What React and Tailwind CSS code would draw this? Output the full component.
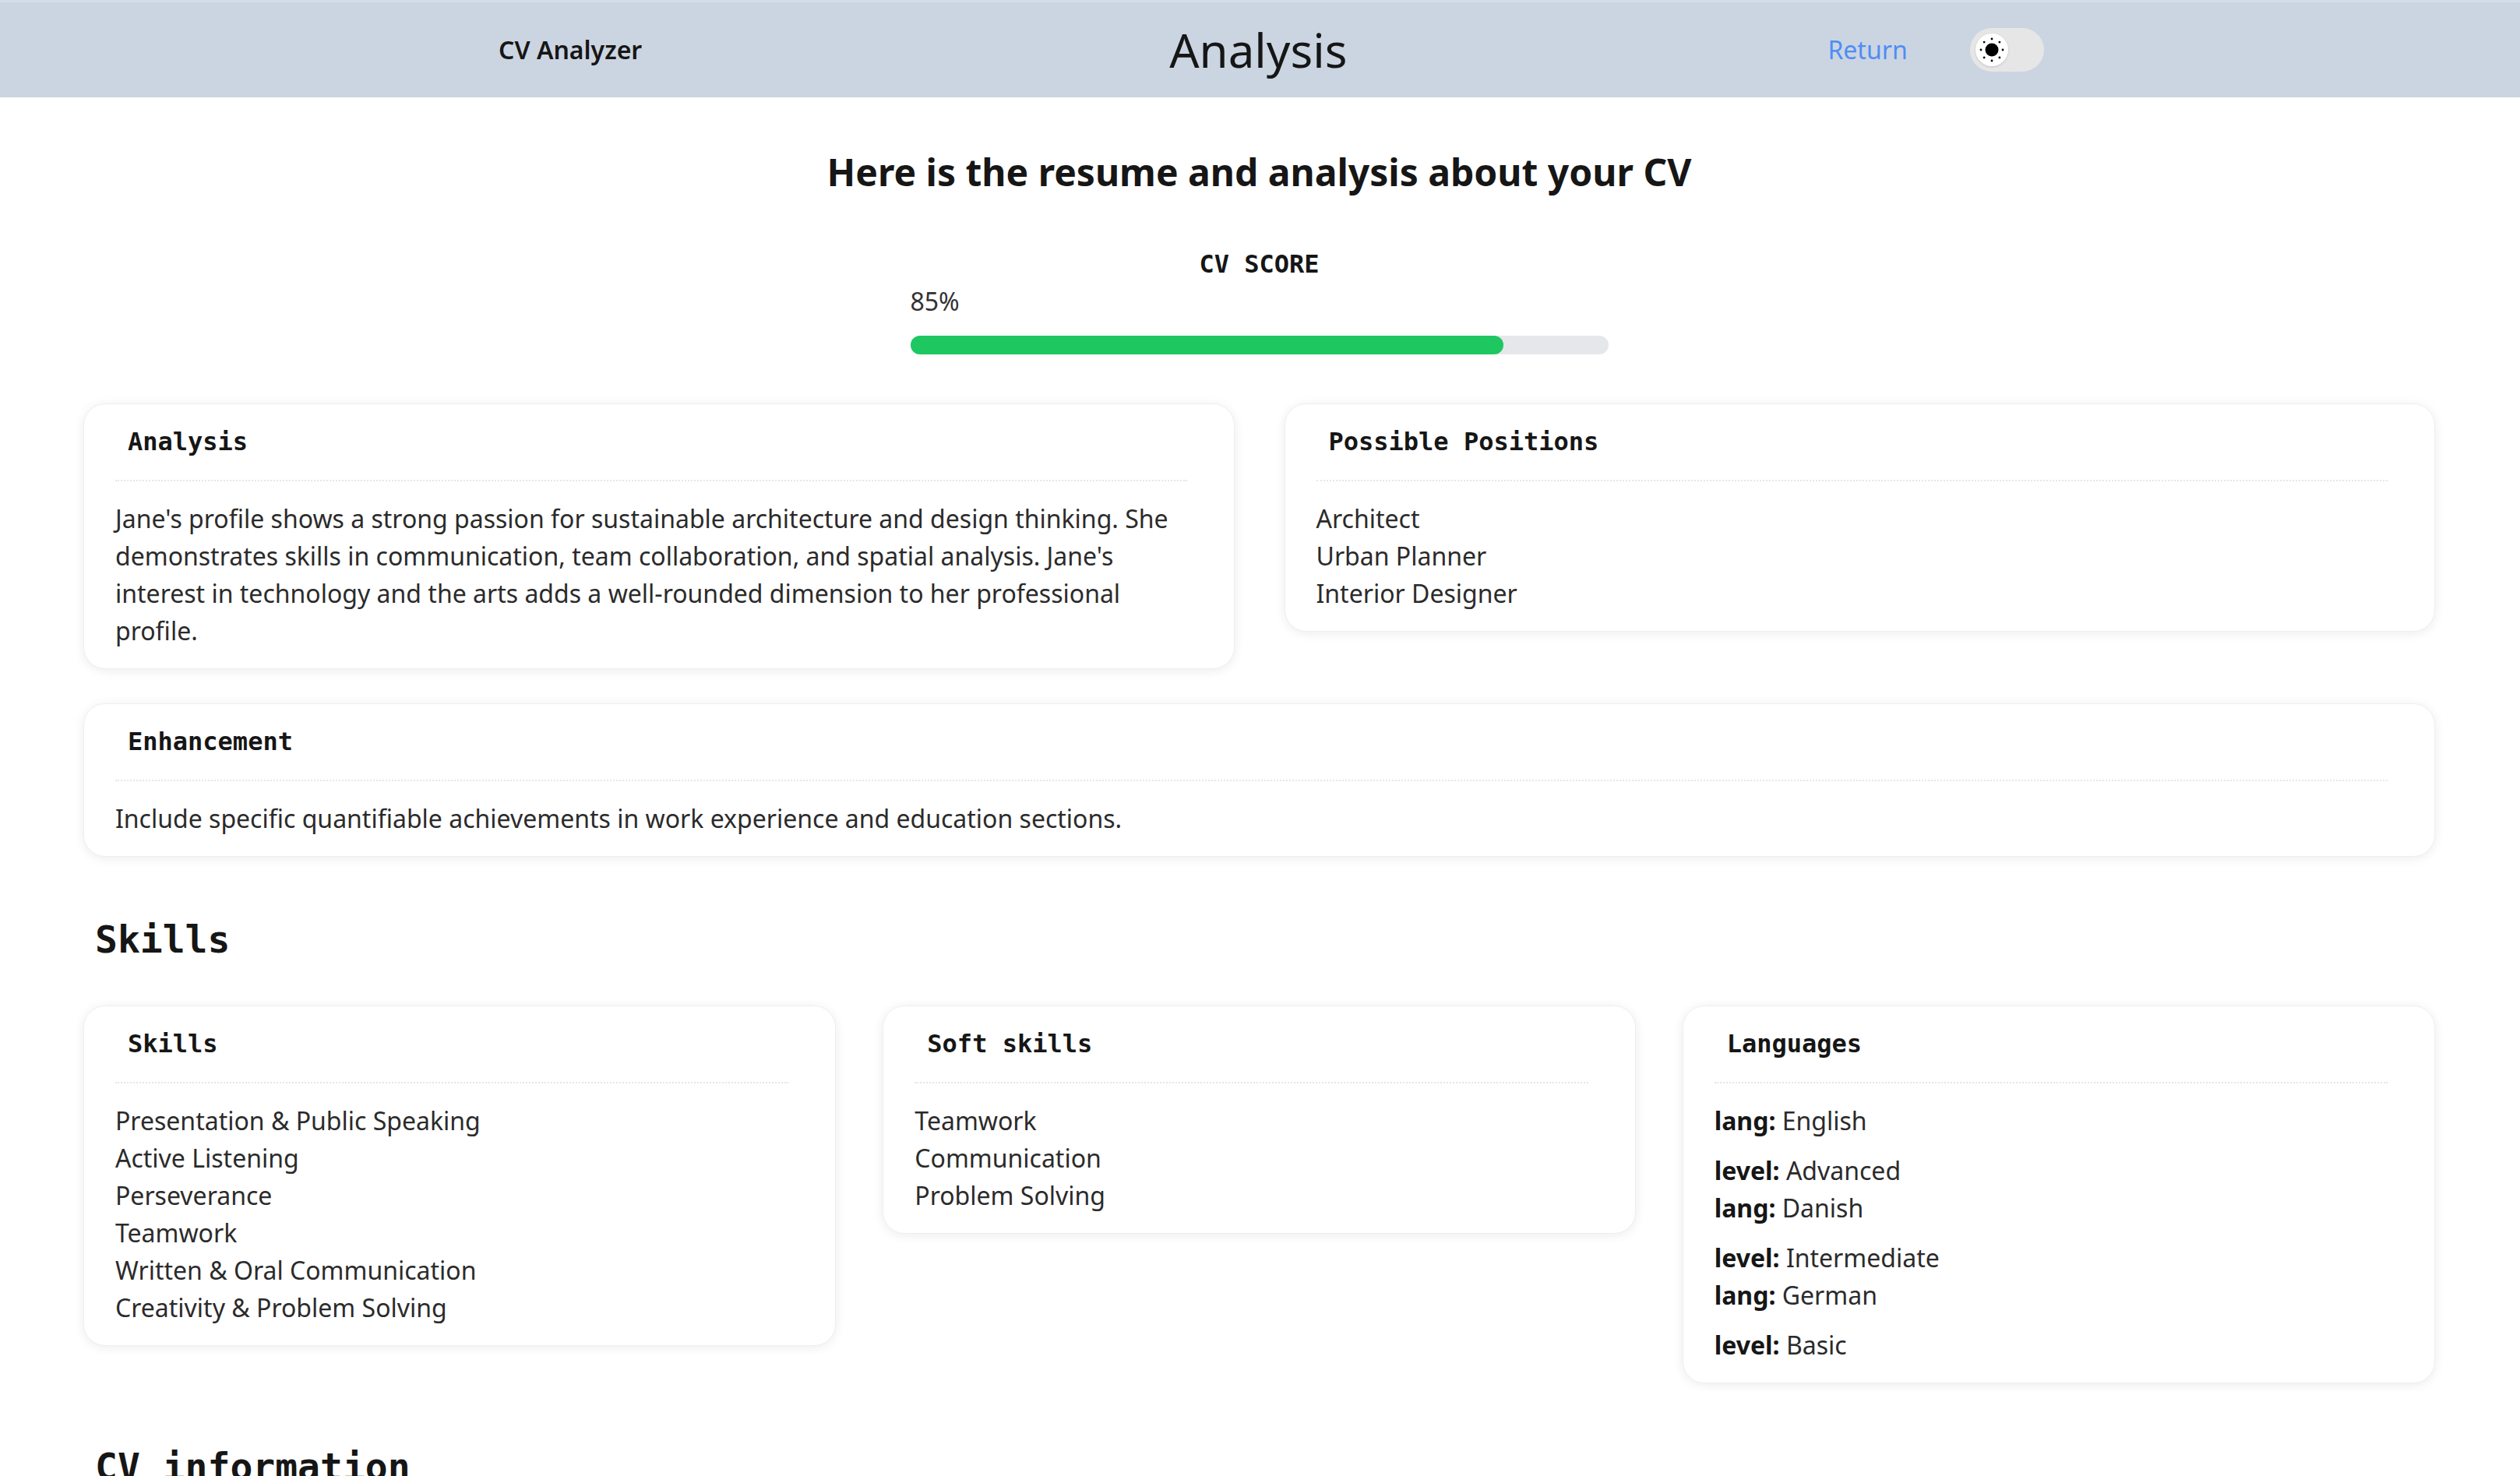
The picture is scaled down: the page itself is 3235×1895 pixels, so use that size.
import React from "react";

// ===== small helpers =====
const SunIcon = () => (
  <svg width="34" height="34" viewBox="0 0 34 34">
    <circle cx="17" cy="17" r="8.5" fill="#000" />
    {[0, 45, 90, 135, 180, 225, 270, 315].map((a) => {
      const r = 14;
      const x = 17 + r * Math.cos((a * Math.PI) / 180);
      const y = 17 + r * Math.sin((a * Math.PI) / 180);
      return <circle key={a} cx={x} cy={y} r="1.4" fill="#000" />;
    })}
  </svg>
);

const Card = ({ title, children, className = "" }) => (
  <div
    className={`rounded-[28px] bg-white border border-[#efefef] shadow-[0_2px_14px_rgba(0,0,0,0.08)] px-10 pt-6 pb-6 ${className}`}
  >
    <div className="pl-4 mr-5 pb-[25px] border-b-2 border-dotted border-[#e6e6e6]">
      <h3 className="font-['DejaVu_Sans_Mono',monospace] text-[32px] font-bold leading-[48px] text-[#161616]">
        {title}
      </h3>
    </div>
    <div className="mt-6 text-[32px] leading-[48px]">{children}</div>
  </div>
);

const SectionTitle = ({ children, className = "" }) => (
  <h2
    className={`pl-[15px] font-['DejaVu_Sans_Mono',monospace] text-[48px] font-bold leading-[72px] text-[#161616] ${className}`}
  >
    {children}
  </h2>
);

const positions = ["Architect", "Urban Planner", "Interior Designer"];
const skills = [
  "Presentation & Public Speaking",
  "Active Listening",
  "Perseverance",
  "Teamwork",
  "Written & Oral Communication",
  "Creativity & Problem Solving",
];
const softSkills = ["Teamwork", "Communication", "Problem Solving"];
const languages = [
  { lang: "English", level: "Advanced" },
  { lang: "Danish", level: "Intermediate" },
  { lang: "German", level: "Basic" },
];

const App = () => {
  const score = 85;

  return (
    <div className="min-h-screen bg-white font-['Noto_Sans',sans-serif] text-[#2b2b2b]">
      {/* === HEADER === */}
      <header className="h-[125px] bg-[#cbd5e1] border-t-[3px] border-[#d5dde8] flex items-center pl-[640px]">
        <span className="text-[32px] font-semibold text-[#161616]">CV Analyzer</span>
        <span className="ml-[677px] text-[60px] leading-none text-[#161616]">Analysis</span>
        <a className="ml-[617px] text-[32px] text-[#4f8df5] cursor-pointer">Return</a>
        <button className="ml-[80px] w-[95px] h-[56px] rounded-full bg-[#e6e6e6] flex items-center pl-[7px]">
          <span className="w-[42px] h-[42px] rounded-full bg-white shadow-[0_1px_3px_rgba(0,0,0,0.15)] flex items-center justify-center">
            <SunIcon />
          </span>
        </button>
      </header>

      {/* === MAIN === */}
      <main className="w-[3019px] ml-[107px] pb-24">
        <h1 className="mt-[60px] text-center text-[48px] font-bold leading-[72px] text-[#161616]">
          Here is the resume and analysis about your CV
        </h1>

        {/* score */}
        <div className="mt-[58px] w-[896px] mx-auto">
          <p className="text-center font-['DejaVu_Sans_Mono',monospace] text-[32px] font-bold leading-[48px] text-[#161616]">
            CV SCORE
          </p>
          <p className="text-[32px] leading-[48px] text-[#333]">{score}%</p>
          <div className="mt-5 h-6 rounded-full bg-[#e5e7eb]">
            <div className="h-full rounded-full bg-[#1ec760]" style={{ width: `${score}%` }} />
          </div>
        </div>

        {/* analysis cards */}
        <div className="mt-[63px] grid grid-cols-2 gap-x-16 gap-y-11 items-start">
          <Card title="Analysis">
            <p>
              Jane's profile shows a strong passion for sustainable architecture and design
              thinking. She demonstrates skills in communication, team collaboration, and
              spatial analysis. Jane's interest in technology and the arts adds a well-rounded
              dimension to her professional profile.
            </p>
          </Card>
          <Card title="Possible Positions">
            {positions.map((p) => (
              <p key={p}>{p}</p>
            ))}
          </Card>
          <Card title="Enhancement" className="col-span-2">
            <p>Include specific quantifiable achievements in work experience and education sections.</p>
          </Card>
        </div>

        {/* skills */}
        <SectionTitle className="mt-[70px]">Skills</SectionTitle>
        <div className="mt-[49px] grid grid-cols-3 gap-[60px] items-start">
          <Card title="Skills">
            {skills.map((s) => (
              <p key={s}>{s}</p>
            ))}
          </Card>
          <Card title="Soft skills">
            {softSkills.map((s) => (
              <p key={s}>{s}</p>
            ))}
          </Card>
          <Card title="Languages">
            {languages.map((l) => (
              <div key={l.lang}>
                <p>
                  <span className="font-bold text-[#161616]">lang:</span> {l.lang}
                </p>
                <p className="mt-4">
                  <span className="font-bold text-[#161616]">level:</span> {l.level}
                </p>
              </div>
            ))}
          </Card>
        </div>

        <SectionTitle className="mt-[71px]">CV information</SectionTitle>
      </main>
    </div>
  );
};

export default App;
